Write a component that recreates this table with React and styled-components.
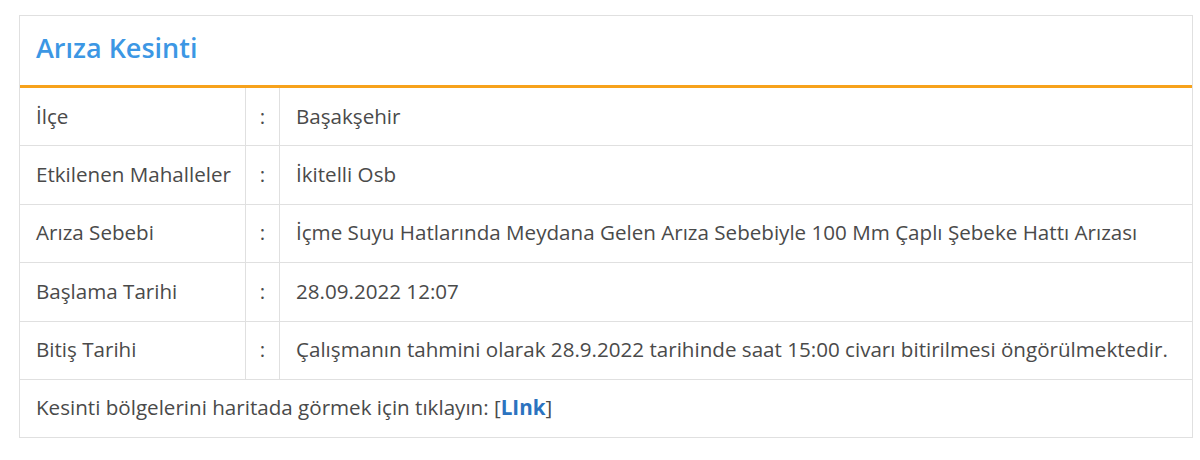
import React from "react";
import styled, { createGlobalStyle } from "styled-components";

const Global = createGlobalStyle`
  html, body { margin: 0; padding: 0; background: #fff; }
  body { font-family: "Open Sans", "Noto Sans", sans-serif; color: #555; }
`;

const Page = styled.div`
  padding: 15px 0 0 19px;
`;

const Panel = styled.div`
  width: 1174px;
  box-sizing: border-box;
  border: 1px solid #e0e0e0;
  background: #fff;
`;

const Header = styled.div`
  height: 72px;
  box-sizing: border-box;
  display: flex;
  align-items: center;
  padding: 0 0 6px 16px;
  border-bottom: 3px solid #f7a21b;
`;

const Title = styled.h2`
  margin: 0;
  font-size: 27px;
  font-weight: 600;
  color: #3c97e4;
`;

const Row = styled.div`
  display: grid;
  grid-template-columns: 226px 34px 1fr;
  height: 58.4px;
  box-sizing: border-box;
  border-bottom: 1px solid #e0e0e0;
`;

const Cell = styled.div`
  display: flex;
  align-items: center;
  justify-content: ${(p) => (p.$center ? "center" : "flex-start")};
  padding: ${(p) => (p.$center ? "0 0 2px" : "0 0 2px 16px")};
  border-right: ${(p) => (p.$last ? "none" : "1px solid #e0e0e0")};
  font-size: 20.6px;
  color: #4a4a4a;
  white-space: nowrap;
`;

const Footer = styled.div`
  height: 57px;
  display: flex;
  align-items: center;
  padding: 0 0 2px 16px;
  box-sizing: border-box;
  font-size: 20.6px;
  color: #4a4a4a;
`;

const LinkText = styled.a`
  font-weight: 700;
  color: #2b73bf;
  text-decoration: none;
`;

const rows = [
  ["İlçe", "Başakşehir"],
  ["Etkilenen Mahalleler", "İkitelli Osb"],
  ["Arıza Sebebi", "İçme Suyu Hatlarında Meydana Gelen Arıza Sebebiyle 100 Mm Çaplı Şebeke Hattı Arızası"],
  ["Başlama Tarihi", "28.09.2022 12:07"],
  ["Bitiş Tarihi", "Çalışmanın tahmini olarak 28.9.2022 tarihinde saat 15:00 civarı bitirilmesi öngörülmektedir."],
];

export default function App() {
  return (
    <Page>
      <Global />
      <Panel>
        <Header>
          <Title>Arıza Kesinti</Title>
        </Header>
        {rows.map(([k, v]) => (
          <Row key={k}>
            <Cell>{k}</Cell>
            <Cell $center>:</Cell>
            <Cell $last>{v}</Cell>
          </Row>
        ))}
        <Footer>
          Kesinti bölgelerini haritada görmek için tıklayın: [<LinkText href="#">LInk</LinkText>]
        </Footer>
      </Panel>
    </Page>
  );
}
